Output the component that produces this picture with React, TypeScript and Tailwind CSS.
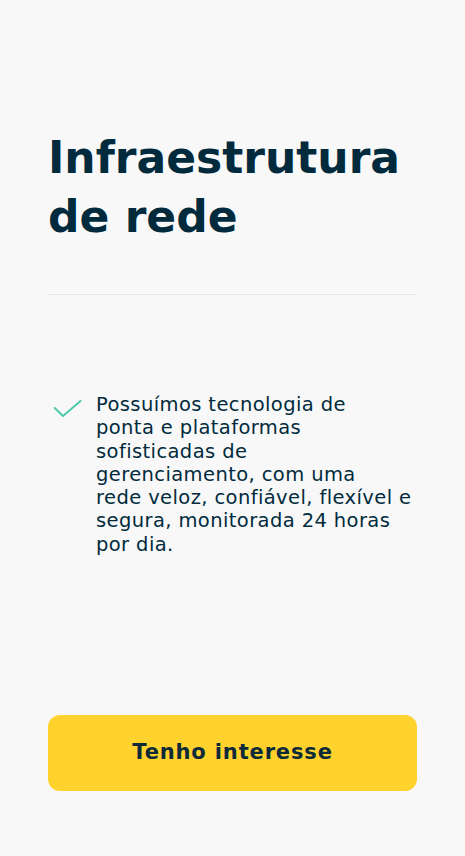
import React from 'react';

const lines = [
  'Possuímos tecnologia de',
  'ponta e plataformas',
  'sofisticadas de',
  'gerenciamento, com uma',
  'rede veloz, confiável, flexível e',
  'segura, monitorada 24 horas',
  'por dia.',
];

const Check = () => (
  <svg width="30" height="22" viewBox="0 0 30 22" fill="none" className="shrink-0 mt-[5px]">
    <path d="M1.7 10 L10 18 L27.5 3" stroke="#4fc9a8" strokeWidth="2" strokeLinecap="round" strokeLinejoin="round" />
  </svg>
);

export default function App() {
  return (
    <div className="min-h-[856px] w-full bg-[#f8f8f8] px-12 flex flex-col font-['DejaVu_Sans',sans-serif] text-[#012b3d]">
      <h1 className="mt-[128px] text-[44px] leading-[59px] font-bold">
        Infraestrutura
        <br />
        de rede
      </h1>

      <div className="mt-[48px] h-px bg-[#e6e6ee]" />

      <div className="mt-[98px] flex items-start gap-[13px] pl-[5px]">
        <Check />
        <p className="text-[19.5px] leading-[23.3px] tracking-[0.4px]">
          {lines.map((l) => (
            <span key={l} className="block whitespace-nowrap">{l}</span>
          ))}
        </p>
      </div>

      <button className="mt-[159px] h-[76px] w-full rounded-xl bg-[#ffd22e] text-[21px] tracking-[0.85px] font-bold text-[#0d2a38]">
        Tenho interesse
      </button>
    </div>
  );
}
